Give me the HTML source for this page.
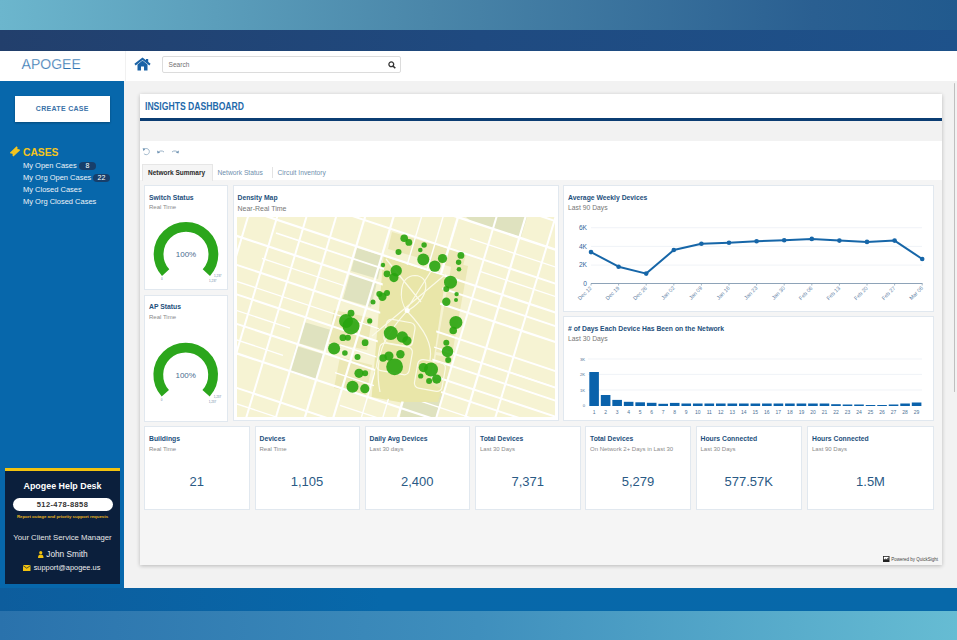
<!DOCTYPE html>
<html><head><meta charset="utf-8">
<style>
*{margin:0;padding:0;box-sizing:border-box}
html,body{width:957px;height:640px;overflow:hidden;font-family:"Liberation Sans",sans-serif;background:#f2f2f2;position:relative}
.a{position:absolute;white-space:nowrap}
#topband{left:0;top:0;width:957px;height:30px;background:linear-gradient(90deg,#6cb6cd 0%,#4a86a9 45%,#2a5f91 85%,#215a8e 100%)}
#navy{left:0;top:30px;width:957px;height:21px;background:linear-gradient(90deg,#223f6c 0%,#1f4a80 50%,#1e528b 100%)}
#hdr{left:0;top:51px;width:957px;height:30px;background:#fff;box-shadow:0 1px 2px rgba(0,0,0,.18)}
#side{left:0;top:81px;width:124px;height:507px;background:#0767ab}
#main{left:124px;top:81px;width:833px;height:507px;background:#f2f2f2}
#botband{left:0;top:588px;width:957px;height:23px;background:linear-gradient(90deg,#0d5d9d 0%,#0768aa 40%,#0768a9 100%)}
#botgrad{left:0;top:611px;width:957px;height:29px;background:linear-gradient(90deg,#2a72ac 0%,#3f8fbd 50%,#66bcd3 100%)}
.logo{left:21.6px;top:56.1px;-webkit-text-stroke:0.25px #fff;font-size:14px;color:#2e72b0;font-weight:normal}
.search{left:162px;top:56px;width:239px;height:17px;border:1px solid #dcdcdc;border-radius:2px;background:#fff}
.search span{position:absolute;left:5.5px;top:4px;font-size:6.6px;color:#707070}
.btn{left:14.6px;top:95.5px;width:95.5px;height:26px;background:#fff;box-shadow:0 1px 2px rgba(0,0,0,.3);text-align:center;font-size:7px;font-weight:bold;letter-spacing:0.3px;color:#3a72a8;line-height:26px}
.cases{left:23px;top:146.8px;font-size:10.3px;font-weight:bold;color:#f4c51d}
.mi{left:23px;font-size:7.5px;color:#eef3f8}
.badge{background:#173f6b;color:#fff;border-radius:5px;font-size:7px;text-align:center;height:8px;line-height:8px}
#help{left:5px;top:468px;width:115px;height:116px;background:#0b1f3c;border-top:3px solid #f2c20f}
.hd{left:0;width:115px;text-align:center}
#dash{left:139.5px;top:94px;width:802.5px;height:471px;background:#f5f5f5;box-shadow:0 1px 4px rgba(0,0,0,.24)}
#dhead{left:139.5px;top:94px;width:802.5px;height:24px;background:#fff}
#dline{left:139.5px;top:118px;width:802.5px;height:3px;background:#0b3d73}
#dgray{left:139.5px;top:121px;width:802.5px;height:20px;background:#f2f2f2}
#dpanel{left:139.5px;top:141px;width:802.5px;height:39px;background:#fff}
.dtitle{left:144.6px;top:100.6px;font-size:10.2px;font-weight:bold;color:#1f6aab;transform:scaleX(0.845);transform-origin:0 0}
.card{position:absolute;background:#fff;border:1px solid #e1e8ef}
.ct{position:absolute;left:4px;top:7.5px;font-size:6.8px;font-weight:bold;color:#1d4f7c;white-space:nowrap}
.cs{position:absolute;left:4px;top:18px;font-size:6px;color:#8a8a8a;white-space:nowrap}
.k .ct{top:8.3px}.k .cs{top:19px}
.kv{position:absolute;left:0;width:100%;text-align:center;top:47px;font-size:13px;color:#2a5a85}
</style></head><body>
<div class="a" id="topband"></div>
<div class="a" id="navy"></div>
<div class="a" id="hdr"></div>
<div class="a logo">APOGEE</div>
<div class="a" style="left:125px;top:51px;width:1px;height:30px;background:#f1f1f1"></div>
<svg class="a" style="left:134px;top:57px" width="17" height="14" viewBox="0 0 17 14">
  <path d="M1 7.6 L8.5 1.8 L16 7.6" fill="none" stroke="#1b63a6" stroke-width="2" stroke-linejoin="miter"/>
  <rect x="12" y="2" width="2.2" height="3.5" fill="#1b63a6"/>
  <path d="M3.5 7.4 L8.5 3.6 L13.5 7.4 V13.5 H10 V9.5 H7 V13.5 H3.5 Z" fill="#1b63a6"/>
</svg>
<div class="a search"><span>Search</span>
  <svg style="position:absolute;left:225px;top:4px" width="8" height="8" viewBox="0 0 8 8"><circle cx="3.3" cy="3.3" r="2.4" fill="none" stroke="#333" stroke-width="1.3"/><path d="M5 5 L7.3 7.3" stroke="#333" stroke-width="1.6"/></svg>
</div>
<div class="a" id="side"></div>
<div class="a" id="main"></div>
<div class="a" style="left:953.5px;top:83px;width:1.7px;height:309px;background:#bfbfbf;border-radius:1px"></div>
<div class="a" id="botband"></div>
<div class="a" id="botgrad"></div>

<!-- sidebar -->
<div class="a btn">CREATE CASE</div>
<svg class="a" style="left:6px;top:142px" width="18" height="18" viewBox="0 0 18 18">
  <g transform="translate(9 9.4) rotate(-43)">
    <path d="M-4.6 -2.6 H4.6 V-1 A1 1 0 0 0 4.6 1 V2.6 H-4.6 V1 A1 1 0 0 0 -4.6 -1 Z" fill="#f4c51d"/>
    <path d="M-1.2 -2.4 V2.4" stroke="#c9a640" stroke-width="0.5" stroke-dasharray="0.8 0.6"/>
  </g>
</svg>
<div class="a cases">CASES</div>
<div class="a mi" style="top:161px">My Open Cases</div>
<div class="a mi badge" style="left:79px;top:162.2px;width:17px">8</div>
<div class="a mi" style="top:173px">My Org Open Cases</div>
<div class="a mi badge" style="left:93px;top:174.2px;width:17px">22</div>
<div class="a mi" style="top:185px">My Closed Cases</div>
<div class="a mi" style="top:197px">My Org Closed Cases</div>

<div class="a" id="help">
  <div class="a hd" style="top:10px;font-size:8.9px;font-weight:bold;color:#fff">Apogee Help Desk</div>
  <div class="a" style="left:7.5px;top:27px;width:100px;height:13px;background:#fff;border-radius:7px;text-align:center;font-size:7.5px;font-weight:bold;letter-spacing:0.4px;color:#333;line-height:13px">512-478-8858</div>
  <div class="a hd" style="top:43.2px;font-size:4.35px;font-weight:bold;color:#e7b320">Report outage and priority support requests</div>
  <div class="a hd" style="top:61.9px;font-size:7.75px;color:#e6e6e6">Your Client Service Manager</div>
  <div class="a hd" style="top:77.6px;font-size:8.3px;color:#eee;padding-left:9px">John Smith</div>
  <svg class="a" style="left:33px;top:79.5px" width="5.5" height="7" viewBox="0 0 5.5 7"><circle cx="2.75" cy="1.7" r="1.6" fill="#f2c20f"/><path d="M0 7 C0 4 1 3.5 2.75 3.5 C4.5 3.5 5.5 4 5.5 7 Z" fill="#f2c20f"/></svg>
  <div class="a hd" style="top:92px;font-size:7.4px;color:#eee;padding-left:9px">support@apogee.us</div>
  <svg class="a" style="left:18px;top:94px" width="7.5" height="6" viewBox="0 0 7.5 6"><rect x="0" y="0" width="7.5" height="6" fill="#f2c20f"/><path d="M0 0.5 L3.75 3.2 L7.5 0.5" fill="none" stroke="#0b1f3c" stroke-width="0.7"/></svg>
</div>

<!-- dashboard -->
<div class="a" id="dash"></div>
<div class="a" id="dhead"></div>
<div class="a dtitle">INSIGHTS DASHBOARD</div>
<div class="a" id="dline"></div>
<div class="a" id="dgray"></div>
<div class="a" id="dpanel"></div>


<!-- toolbar -->
<svg class="a" style="left:142px;top:147px" width="40" height="9" viewBox="0 0 40 9">
  <path d="M1.6 3 A3.1 3.1 0 1 1 1.9 6.6" fill="none" stroke="#9ab2c7" stroke-width="0.9"/>
  <path d="M0.6 1.2 L3.4 1.4 L1.6 4.2 Z" fill="#6f93b3"/>
  <path d="M16 5.6 C17 3.6 20.5 3.4 22 5" fill="none" stroke="#9ab2c7" stroke-width="1"/>
  <path d="M15 3.5 L15.6 6.4 L18.2 5.6 Z" fill="#6f93b3"/>
  <path d="M36 5.6 C35 3.6 31.5 3.4 30 5" fill="none" stroke="#9ab2c7" stroke-width="1"/>
  <path d="M37 3.5 L36.4 6.4 L33.8 5.6 Z" fill="#6f93b3"/>
</svg>
<div class="a" style="left:142px;top:164px;width:70.5px;height:17px;background:#f5f5f5;border:1px solid #e6e6e6;border-bottom:none"></div>
<div class="a" style="left:148px;top:168.8px;font-size:6.5px;font-weight:bold;color:#2a2a2a">Network Summary</div>
<div class="a" style="left:217.5px;top:168.8px;font-size:6.7px;color:#6f8fae">Network Status</div>
<div class="a" style="left:272px;top:167px;width:1px;height:11px;background:#e3e3e3"></div>
<div class="a" style="left:277.5px;top:168.8px;font-size:6.7px;color:#6f8fae">Circuit Inventory</div>

<!-- Switch status -->
<div class="card" style="left:144px;top:185px;width:84px;height:105px">
  <div class="ct">Switch Status</div>
  <div class="cs">Real Time</div>
</div>
<div class="card" style="left:144px;top:294.5px;width:84px;height:127px">
  <div class="ct">AP Status</div>
  <div class="cs">Real Time</div>
</div>
<div class="card" style="left:232.5px;top:185px;width:326px;height:236px">
  <div class="ct">Density Map</div>
  <div class="cs" style="top:19px;font-size:7px;color:#777">Near-Real Time</div>
</div>
<div class="card" style="left:563px;top:185px;width:371px;height:126.5px">
  <div class="ct">Average Weekly Devices</div>
  <div class="cs" style="font-size:6.8px;color:#777">Last 90 Days</div>
</div>
<div class="card" style="left:563px;top:316.3px;width:371px;height:104.7px">
  <div class="ct">&#35; of Days Each Device Has Been on the Network</div>
  <div class="cs" style="font-size:6.8px;color:#777">Last 30 Days</div>
</div>

<!-- KPIs -->
<div class="card k" style="left:144px;top:426px;width:105.5px;height:83.5px"><div class="ct">Buildings</div><div class="cs">Real Time</div><div class="kv">21</div></div>
<div class="card k" style="left:254.5px;top:426px;width:105px;height:83.5px"><div class="ct">Devices</div><div class="cs">Real Time</div><div class="kv">1,105</div></div>
<div class="card k" style="left:364.5px;top:426px;width:105.5px;height:83.5px"><div class="ct">Daily Avg Devices</div><div class="cs">Last 30 days</div><div class="kv">2,400</div></div>
<div class="card k" style="left:475px;top:426px;width:105.5px;height:83.5px"><div class="ct">Total Devices</div><div class="cs">Last 30 Days</div><div class="kv">7,371</div></div>
<div class="card k" style="left:585px;top:426px;width:106px;height:83.5px"><div class="ct">Total Devices</div><div class="cs">On Network 2+ Days in Last 30</div><div class="kv">5,279</div></div>
<div class="card k" style="left:695.5px;top:426px;width:106.5px;height:83.5px"><div class="ct">Hours Connected</div><div class="cs">Last 30 Days</div><div class="kv">577.57K</div></div>
<div class="card k" style="left:807px;top:426px;width:127px;height:83.5px"><div class="ct">Hours Connected</div><div class="cs">Last 90 Days</div><div class="kv">1.5M</div></div>

<svg class="a" style="left:237px;top:217px" width="318" height="200" viewBox="237 217 318 200">
<rect x="237" y="217" width="318" height="200" fill="#f6f3d3"/>
<polygon points="383.5,256.7 446.0,274.5 430.0,384.0 444.0,390.0 440.0,403.0 404.0,403.0 371.6,397.0" fill="#e9e6a9" />
<polygon points="392.0,232.0 466.0,254.0 462.0,270.0 388.0,249.0" fill="#ece8b6" />
<polygon points="452.0,262.0 468.0,266.0 452.0,355.0 436.0,352.0" fill="#ece8b6" />
<polygon points="436.0,355.0 452.0,358.0 444.0,392.0 430.0,388.0" fill="#ece8b6" />
<polygon points="334.0,310.0 372.0,318.0 367.0,350.0 328.0,342.0" fill="#ece8b6" />
<polygon points="340.0,357.0 372.0,365.0 366.0,395.0 334.0,388.0" fill="#ece8b6" />
<polygon points="357.0,248.0 383.0,256.0 378.0,279.0 351.0,271.0" fill="#dfe2bf" />
<polygon points="350.0,274.0 377.0,282.0 371.0,307.0 343.0,299.0" fill="#dfe2bf" />
<polygon points="304.0,322.0 331.0,330.0 325.0,351.0 298.0,343.0" fill="#dfe2bf" />
<polygon points="296.0,346.0 323.0,354.0 316.0,380.0 289.0,372.0" fill="#dfe2bf" />
<polygon points="406.0,384.0 442.0,395.0 436.0,417.0 400.0,417.0" fill="#dfe2bf" />
<polygon points="466.0,217.0 527.0,217.0 521.0,237.0 472.0,222.0" fill="#dfe2bf" />
<line x1="249.4" y1="212" x2="186.4" y2="422" stroke="#fff" stroke-width="2"/>
<line x1="278.6" y1="212" x2="215.6" y2="422" stroke="#fff" stroke-width="2"/>
<line x1="307.9" y1="212" x2="244.9" y2="422" stroke="#fff" stroke-width="2"/>
<line x1="337.5" y1="212" x2="274.5" y2="422" stroke="#fff" stroke-width="2"/>
<line x1="366.5" y1="212" x2="303.5" y2="422" stroke="#fff" stroke-width="2.2"/>
<line x1="395.0" y1="212" x2="332.0" y2="422" stroke="#fff" stroke-width="2.2"/>
<line x1="423.0" y1="212" x2="360.0" y2="422" stroke="#fff" stroke-width="1.4"/>
<line x1="444.5" y1="212" x2="381.5" y2="422" stroke="#fff" stroke-width="1.4"/>
<line x1="459.5" y1="212" x2="396.5" y2="422" stroke="#fff" stroke-width="2.4"/>
<line x1="498.0" y1="212" x2="435.0" y2="422" stroke="#fff" stroke-width="2"/>
<line x1="527.0" y1="212" x2="464.0" y2="422" stroke="#fff" stroke-width="2.2"/>
<line x1="557.0" y1="212" x2="494.0" y2="422" stroke="#fff" stroke-width="2"/>
<line x1="232" y1="113.3" x2="560" y2="222.6" stroke="#fff" stroke-width="2"/>
<line x1="232" y1="141.9" x2="560" y2="251.2" stroke="#fff" stroke-width="2.4"/>
<line x1="470" y1="238.6" x2="560" y2="268.6" stroke="#fff" stroke-width="1.3"/>
<line x1="232" y1="175.9" x2="560" y2="285.2" stroke="#fff" stroke-width="2"/>
<line x1="480" y1="271.4" x2="560" y2="298.1" stroke="#fff" stroke-width="1.3"/>
<line x1="232" y1="204.8" x2="560" y2="314.1" stroke="#fff" stroke-width="2.2"/>
<line x1="276" y1="233.0" x2="560" y2="327.6" stroke="#fff" stroke-width="1.8"/>
<line x1="232" y1="234.3" x2="560" y2="343.6" stroke="#fff" stroke-width="2.2"/>
<line x1="262" y1="258.3" x2="345" y2="286.0" stroke="#fff" stroke-width="1.3"/>
<line x1="232" y1="263.3" x2="560" y2="372.6" stroke="#fff" stroke-width="2"/>
<line x1="440" y1="349.1" x2="560" y2="389.1" stroke="#fff" stroke-width="2"/>
<line x1="232" y1="279.8" x2="560" y2="389.1" stroke="#fff" stroke-width="1.3"/>
<line x1="232" y1="292.8" x2="560" y2="402.1" stroke="#fff" stroke-width="2"/>
<line x1="440" y1="378.2" x2="560" y2="418.2" stroke="#fff" stroke-width="2"/>
<line x1="232" y1="308.9" x2="290" y2="328.2" stroke="#fff" stroke-width="1.3"/>
<line x1="340" y1="344.9" x2="440" y2="378.2" stroke="#fff" stroke-width="1.3"/>
<line x1="232" y1="322.3" x2="560" y2="431.6" stroke="#fff" stroke-width="2"/>
<line x1="232" y1="338.3" x2="283" y2="355.3" stroke="#fff" stroke-width="1.3"/>
<line x1="335" y1="372.6" x2="560" y2="447.6" stroke="#fff" stroke-width="1.3"/>
<line x1="232" y1="351.8" x2="560" y2="461.1" stroke="#fff" stroke-width="2.2"/>
<line x1="340" y1="405.3" x2="560" y2="478.6" stroke="#fff" stroke-width="1.3"/>
<line x1="232" y1="386.3" x2="560" y2="495.6" stroke="#fff" stroke-width="2"/>
<line x1="232" y1="402.3" x2="560" y2="511.6" stroke="#fff" stroke-width="1.3"/>
<line x1="232" y1="416.3" x2="560" y2="525.6" stroke="#fff" stroke-width="2"/>
<polygon points="385.0,258.0 444.0,276.0 429.0,383.0 442.0,389.0 438.0,402.0 405.0,402.0 373.0,396.0" fill="#e9e6a9" />
<g fill="none" stroke="#fbfae8" stroke-width="1.2">
<path d="M407 311 C 398 300, 399 276, 415 275.5 C 431 276, 430 298, 407 311"/>
<path d="M386 259 L 421 302 M433 268 L 405 312 M 372 336 L 446 274"/>
<path d="M407 311 C 390 330, 372 350, 380 392 M407 311 C 425 330, 433 345, 430 360"/>
<rect x="385" y="321" width="29" height="24" rx="5" transform="rotate(10 400 333)"/>
<rect x="378" y="345" width="33" height="28" rx="5" transform="rotate(10 395 359)"/>
<rect x="416" y="361" width="28" height="29" rx="5" transform="rotate(10 430 375)"/>
</g>
<circle cx="407.2" cy="310.5" r="2.5" fill="#fff"/>
<g fill="#28a40e" fill-opacity="0.9">
<circle cx="404.2" cy="238.2" r="3.8"/>
<circle cx="408.8" cy="242.4" r="3.4"/>
<circle cx="398.5" cy="252" r="3"/>
<circle cx="424.1" cy="245" r="2.7"/>
<circle cx="420.3" cy="250" r="2.3"/>
<circle cx="423.3" cy="259.6" r="6"/>
<circle cx="434.8" cy="266.1" r="5.7"/>
<circle cx="442.5" cy="258.5" r="4.6"/>
<circle cx="460.9" cy="255.4" r="3.4"/>
<circle cx="458.6" cy="262.3" r="2.7"/>
<circle cx="459" cy="269.2" r="2.3"/>
<circle cx="396.2" cy="270.7" r="5.7"/>
<circle cx="393.9" cy="277.6" r="4.6"/>
<circle cx="387" cy="273.8" r="3.4"/>
<circle cx="450.5" cy="282.2" r="6.5"/>
<circle cx="446.3" cy="289.1" r="3"/>
<circle cx="446.3" cy="301.7" r="4.2"/>
<circle cx="456.6" cy="294.1" r="2.2"/>
<circle cx="382.4" cy="296.8" r="4.2"/>
<circle cx="379.3" cy="294.1" r="3"/>
<circle cx="387" cy="292.9" r="3"/>
<circle cx="346" cy="321" r="7"/>
<circle cx="351" cy="326" r="8.5"/>
<circle cx="351" cy="313.2" r="3.4"/>
<circle cx="342.9" cy="337.7" r="3.4"/>
<circle cx="347.9" cy="337.7" r="3"/>
<circle cx="334.1" cy="348.5" r="6"/>
<circle cx="344.9" cy="353" r="2.8"/>
<circle cx="365.1" cy="342.7" r="3.4"/>
<circle cx="357.5" cy="356.9" r="3"/>
<circle cx="369.7" cy="320.9" r="2.6"/>
<circle cx="359" cy="373.3" r="4.6"/>
<circle cx="365.1" cy="373.3" r="3"/>
<circle cx="352.5" cy="386.7" r="6"/>
<circle cx="364.8" cy="388.7" r="4.6"/>
<circle cx="390.8" cy="333.1" r="7"/>
<circle cx="402.3" cy="337" r="5.7"/>
<circle cx="406.9" cy="340.8" r="4.6"/>
<circle cx="388.9" cy="356.1" r="4.6"/>
<circle cx="400.4" cy="354.2" r="4.2"/>
<circle cx="394.6" cy="366.8" r="8.4"/>
<circle cx="383.1" cy="358" r="3.8"/>
<circle cx="455.9" cy="322.4" r="6.5"/>
<circle cx="453.2" cy="330.5" r="3.8"/>
<circle cx="447.5" cy="351.5" r="5.7"/>
<circle cx="446.3" cy="342.7" r="3"/>
<circle cx="448.2" cy="359.9" r="3"/>
<circle cx="431" cy="369.5" r="7"/>
<circle cx="423.3" cy="367.6" r="4.6"/>
<circle cx="436.7" cy="379.1" r="4.6"/>
<circle cx="429.1" cy="381" r="3"/>
<circle cx="420.7" cy="376" r="2.6"/>
<circle cx="373" cy="302" r="2.5"/>
<circle cx="383" cy="265" r="2.2"/>
<circle cx="456" cy="300" r="2"/>
</g>
</svg>
<svg class="a" style="left:0;top:0" width="957" height="640" viewBox="0 0 957 640"><path d="M165.64 272.63 A27.4 27.4 0 1 1 206.36 272.63" fill="none" stroke="#2ba61c" stroke-width="9.799999999999997"/><text x="186" y="257.1" text-anchor="middle" font-size="8" fill="#4a6d90" font-family="Liberation Sans">100%</text><text x="161" y="279.8" font-size="3" fill="#6a89a6" font-family="Liberation Sans">0</text><text x="214" y="277.3" font-size="3" fill="#6a89a6" font-family="Liberation Sans">1,237</text><text x="209" y="281.8" font-size="3" fill="#6a89a6" font-family="Liberation Sans">1,237</text><path d="M165.34 393.33 A27.4 27.4 0 1 1 206.06 393.33" fill="none" stroke="#2ba61c" stroke-width="9.799999999999997"/><text x="185.7" y="377.8" text-anchor="middle" font-size="8" fill="#4a6d90" font-family="Liberation Sans">100%</text><text x="160.7" y="400.5" font-size="3" fill="#6a89a6" font-family="Liberation Sans">0</text><text x="213.7" y="398" font-size="3" fill="#6a89a6" font-family="Liberation Sans">1,237</text><text x="208.7" y="402.5" font-size="3" fill="#6a89a6" font-family="Liberation Sans">1,237</text></svg>
<svg class="a" style="left:0;top:0" width="957" height="640" viewBox="0 0 957 640" font-family="Liberation Sans">
<line x1="591" y1="227.7" x2="922" y2="227.7" stroke="#e9eef3" stroke-width="0.7"/>
<line x1="591" y1="246.4" x2="922" y2="246.4" stroke="#e9eef3" stroke-width="0.7"/>
<line x1="591" y1="265.1" x2="922" y2="265.1" stroke="#e9eef3" stroke-width="0.7"/>
<text x="587" y="230.0" text-anchor="end" font-size="6.6" fill="#33659a">6K</text>
<text x="587" y="248.70000000000002" text-anchor="end" font-size="6.6" fill="#33659a">4K</text>
<text x="587" y="267.40000000000003" text-anchor="end" font-size="6.6" fill="#33659a">2K</text>
<text x="587" y="285.90000000000003" text-anchor="end" font-size="6.6" fill="#33659a">0</text>
<line x1="591" y1="283.5" x2="922.5" y2="283.5" stroke="#8ea3b8" stroke-width="1"/>
<line x1="591.0" y1="283.5" x2="591.0" y2="285.5" stroke="#8ea3b8" stroke-width="0.8"/>
<text transform="translate(592.2,288.5) rotate(-45)" text-anchor="end" font-size="5.4" fill="#5f82a6">Dec 12</text>
<line x1="618.6" y1="283.5" x2="618.6" y2="285.5" stroke="#8ea3b8" stroke-width="0.8"/>
<text transform="translate(619.8,288.5) rotate(-45)" text-anchor="end" font-size="5.4" fill="#5f82a6">Dec 19</text>
<line x1="646.2" y1="283.5" x2="646.2" y2="285.5" stroke="#8ea3b8" stroke-width="0.8"/>
<text transform="translate(647.4,288.5) rotate(-45)" text-anchor="end" font-size="5.4" fill="#5f82a6">Dec 26</text>
<line x1="673.8" y1="283.5" x2="673.8" y2="285.5" stroke="#8ea3b8" stroke-width="0.8"/>
<text transform="translate(675.0,288.5) rotate(-45)" text-anchor="end" font-size="5.4" fill="#5f82a6">Jan 02</text>
<line x1="701.4" y1="283.5" x2="701.4" y2="285.5" stroke="#8ea3b8" stroke-width="0.8"/>
<text transform="translate(702.6,288.5) rotate(-45)" text-anchor="end" font-size="5.4" fill="#5f82a6">Jan 09</text>
<line x1="729.0" y1="283.5" x2="729.0" y2="285.5" stroke="#8ea3b8" stroke-width="0.8"/>
<text transform="translate(730.2,288.5) rotate(-45)" text-anchor="end" font-size="5.4" fill="#5f82a6">Jan 16</text>
<line x1="756.6" y1="283.5" x2="756.6" y2="285.5" stroke="#8ea3b8" stroke-width="0.8"/>
<text transform="translate(757.8,288.5) rotate(-45)" text-anchor="end" font-size="5.4" fill="#5f82a6">Jan 23</text>
<line x1="784.2" y1="283.5" x2="784.2" y2="285.5" stroke="#8ea3b8" stroke-width="0.8"/>
<text transform="translate(785.4,288.5) rotate(-45)" text-anchor="end" font-size="5.4" fill="#5f82a6">Jan 30</text>
<line x1="811.8" y1="283.5" x2="811.8" y2="285.5" stroke="#8ea3b8" stroke-width="0.8"/>
<text transform="translate(813.0,288.5) rotate(-45)" text-anchor="end" font-size="5.4" fill="#5f82a6">Feb 06</text>
<line x1="839.4" y1="283.5" x2="839.4" y2="285.5" stroke="#8ea3b8" stroke-width="0.8"/>
<text transform="translate(840.6,288.5) rotate(-45)" text-anchor="end" font-size="5.4" fill="#5f82a6">Feb 13</text>
<line x1="867.0" y1="283.5" x2="867.0" y2="285.5" stroke="#8ea3b8" stroke-width="0.8"/>
<text transform="translate(868.2,288.5) rotate(-45)" text-anchor="end" font-size="5.4" fill="#5f82a6">Feb 20</text>
<line x1="894.6" y1="283.5" x2="894.6" y2="285.5" stroke="#8ea3b8" stroke-width="0.8"/>
<text transform="translate(895.8,288.5) rotate(-45)" text-anchor="end" font-size="5.4" fill="#5f82a6">Feb 27</text>
<line x1="922.2" y1="283.5" x2="922.2" y2="285.5" stroke="#8ea3b8" stroke-width="0.8"/>
<text transform="translate(923.4,288.5) rotate(-45)" text-anchor="end" font-size="5.4" fill="#5f82a6">Mar 06</text>
<polyline points="591.0,252.1 618.6,266.7 646.2,273.6 673.8,250.0 701.4,243.7 729.0,242.7 756.6,241.2 784.2,240.2 811.8,238.9 839.4,240.6 867.0,241.9 894.6,240.6 922.2,259.0" fill="none" stroke="#1666a8" stroke-width="2" stroke-linejoin="round"/>
<circle cx="591.0" cy="252.1" r="2.3" fill="#1666a8"/>
<circle cx="618.6" cy="266.7" r="2.3" fill="#1666a8"/>
<circle cx="646.2" cy="273.6" r="2.3" fill="#1666a8"/>
<circle cx="673.8" cy="250.0" r="2.3" fill="#1666a8"/>
<circle cx="701.4" cy="243.7" r="2.3" fill="#1666a8"/>
<circle cx="729.0" cy="242.7" r="2.3" fill="#1666a8"/>
<circle cx="756.6" cy="241.2" r="2.3" fill="#1666a8"/>
<circle cx="784.2" cy="240.2" r="2.3" fill="#1666a8"/>
<circle cx="811.8" cy="238.9" r="2.3" fill="#1666a8"/>
<circle cx="839.4" cy="240.6" r="2.3" fill="#1666a8"/>
<circle cx="867.0" cy="241.9" r="2.3" fill="#1666a8"/>
<circle cx="894.6" cy="240.6" r="2.3" fill="#1666a8"/>
<circle cx="922.2" cy="259.0" r="2.3" fill="#1666a8"/>
</svg>
<svg class="a" style="left:0;top:0" width="957" height="640" viewBox="0 0 957 640" font-family="Liberation Sans">
<line x1="588" y1="359" x2="922" y2="359" stroke="#e9eef3" stroke-width="0.7"/>
<text x="585" y="360.6" text-anchor="end" font-size="4.2" fill="#4f7396">3K</text>
<line x1="588" y1="374.4" x2="922" y2="374.4" stroke="#e9eef3" stroke-width="0.7"/>
<text x="585" y="376.0" text-anchor="end" font-size="4.2" fill="#4f7396">2K</text>
<line x1="588" y1="390" x2="922" y2="390" stroke="#e9eef3" stroke-width="0.7"/>
<text x="585" y="391.6" text-anchor="end" font-size="4.2" fill="#4f7396">1K</text>
<text x="585" y="407.3" text-anchor="end" font-size="4.2" fill="#4f7396">0</text>
<rect x="589.30" y="372" width="9.6" height="34.0" fill="#0a62ab"/>
<text x="594.10" y="414.2" text-anchor="middle" font-size="5" fill="#4f7396">1</text>
<rect x="600.82" y="395" width="9.6" height="11.0" fill="#0a62ab"/>
<text x="605.62" y="414.2" text-anchor="middle" font-size="5" fill="#4f7396">2</text>
<rect x="612.34" y="399.9" width="9.6" height="6.1" fill="#0a62ab"/>
<text x="617.14" y="414.2" text-anchor="middle" font-size="5" fill="#4f7396">3</text>
<rect x="623.85" y="401.8" width="9.6" height="4.2" fill="#0a62ab"/>
<text x="628.65" y="414.2" text-anchor="middle" font-size="5" fill="#4f7396">4</text>
<rect x="635.37" y="402.3" width="9.6" height="3.7" fill="#0a62ab"/>
<text x="640.17" y="414.2" text-anchor="middle" font-size="5" fill="#4f7396">5</text>
<rect x="646.89" y="402.8" width="9.6" height="3.2" fill="#0a62ab"/>
<text x="651.69" y="414.2" text-anchor="middle" font-size="5" fill="#4f7396">6</text>
<rect x="658.41" y="403.8" width="9.6" height="2.2" fill="#0a62ab"/>
<text x="663.21" y="414.2" text-anchor="middle" font-size="5" fill="#4f7396">7</text>
<rect x="669.92" y="402.9" width="9.6" height="3.1" fill="#0a62ab"/>
<text x="674.72" y="414.2" text-anchor="middle" font-size="5" fill="#4f7396">8</text>
<rect x="681.44" y="403.5" width="9.6" height="2.5" fill="#0a62ab"/>
<text x="686.24" y="414.2" text-anchor="middle" font-size="5" fill="#4f7396">9</text>
<rect x="692.96" y="403.5" width="9.6" height="2.5" fill="#0a62ab"/>
<text x="697.76" y="414.2" text-anchor="middle" font-size="5" fill="#4f7396">10</text>
<rect x="704.48" y="403.5" width="9.6" height="2.5" fill="#0a62ab"/>
<text x="709.28" y="414.2" text-anchor="middle" font-size="5" fill="#4f7396">11</text>
<rect x="716.00" y="403.5" width="9.6" height="2.5" fill="#0a62ab"/>
<text x="720.80" y="414.2" text-anchor="middle" font-size="5" fill="#4f7396">12</text>
<rect x="727.51" y="403.5" width="9.6" height="2.5" fill="#0a62ab"/>
<text x="732.31" y="414.2" text-anchor="middle" font-size="5" fill="#4f7396">13</text>
<rect x="739.03" y="403.5" width="9.6" height="2.5" fill="#0a62ab"/>
<text x="743.83" y="414.2" text-anchor="middle" font-size="5" fill="#4f7396">14</text>
<rect x="750.55" y="403.5" width="9.6" height="2.5" fill="#0a62ab"/>
<text x="755.35" y="414.2" text-anchor="middle" font-size="5" fill="#4f7396">15</text>
<rect x="762.07" y="403.5" width="9.6" height="2.5" fill="#0a62ab"/>
<text x="766.87" y="414.2" text-anchor="middle" font-size="5" fill="#4f7396">16</text>
<rect x="773.59" y="403.5" width="9.6" height="2.5" fill="#0a62ab"/>
<text x="778.39" y="414.2" text-anchor="middle" font-size="5" fill="#4f7396">17</text>
<rect x="785.10" y="403.5" width="9.6" height="2.5" fill="#0a62ab"/>
<text x="789.90" y="414.2" text-anchor="middle" font-size="5" fill="#4f7396">18</text>
<rect x="796.62" y="403.5" width="9.6" height="2.5" fill="#0a62ab"/>
<text x="801.42" y="414.2" text-anchor="middle" font-size="5" fill="#4f7396">19</text>
<rect x="808.14" y="403.5" width="9.6" height="2.5" fill="#0a62ab"/>
<text x="812.94" y="414.2" text-anchor="middle" font-size="5" fill="#4f7396">20</text>
<rect x="819.66" y="403.5" width="9.6" height="2.5" fill="#0a62ab"/>
<text x="824.46" y="414.2" text-anchor="middle" font-size="5" fill="#4f7396">21</text>
<rect x="831.17" y="404.2" width="9.6" height="1.8" fill="#0a62ab"/>
<text x="835.97" y="414.2" text-anchor="middle" font-size="5" fill="#4f7396">22</text>
<rect x="842.69" y="404.5" width="9.6" height="1.5" fill="#0a62ab"/>
<text x="847.49" y="414.2" text-anchor="middle" font-size="5" fill="#4f7396">23</text>
<rect x="854.21" y="404.5" width="9.6" height="1.5" fill="#0a62ab"/>
<text x="859.01" y="414.2" text-anchor="middle" font-size="5" fill="#4f7396">24</text>
<rect x="865.73" y="405" width="9.6" height="1.0" fill="#0a62ab"/>
<text x="870.53" y="414.2" text-anchor="middle" font-size="5" fill="#4f7396">25</text>
<rect x="877.25" y="405" width="9.6" height="1.0" fill="#0a62ab"/>
<text x="882.05" y="414.2" text-anchor="middle" font-size="5" fill="#4f7396">26</text>
<rect x="888.76" y="404.5" width="9.6" height="1.5" fill="#0a62ab"/>
<text x="893.56" y="414.2" text-anchor="middle" font-size="5" fill="#4f7396">27</text>
<rect x="900.28" y="403.5" width="9.6" height="2.5" fill="#0a62ab"/>
<text x="905.08" y="414.2" text-anchor="middle" font-size="5" fill="#4f7396">28</text>
<rect x="911.80" y="402.5" width="9.6" height="3.5" fill="#0a62ab"/>
<text x="916.60" y="414.2" text-anchor="middle" font-size="5" fill="#4f7396">29</text>
</svg>
<!-- powered by -->
<svg class="a" style="left:883px;top:555.5px" width="6.5" height="6.5" viewBox="0 0 6.5 6.5"><rect x="0" y="0" width="6.5" height="6.5" fill="#222"/><rect x="0.8" y="0.8" width="4.9" height="2.6" fill="#fff"/><path d="M0.8 4 L2.5 2.5 L3.6 3.3 L5.7 1.2 V3.4 H0.8Z" fill="#222"/></svg>
<div class="a" style="left:891.3px;top:557.2px;font-size:4.5px;color:#444">Powered by QuickSight</div>
</body></html>
